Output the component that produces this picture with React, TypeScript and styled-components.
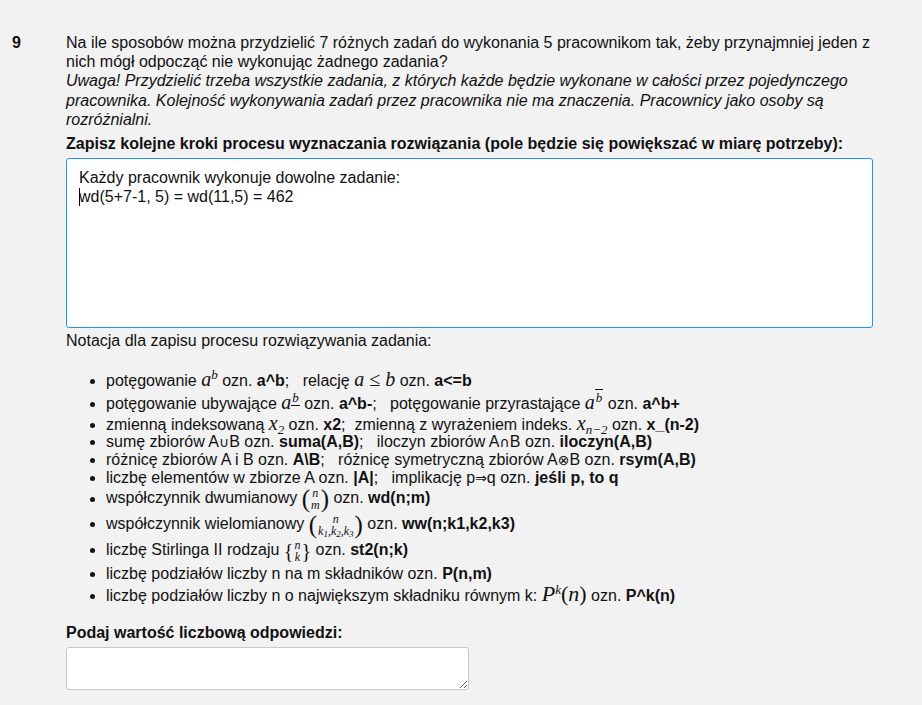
import React from "react";
import styled, { createGlobalStyle } from "styled-components";

const Global = createGlobalStyle`
  body {
    margin: 0;
    background: #f2f2f2;
    font-family: "Liberation Sans", Arial, sans-serif;
    font-size: 16px;
    color: #111;
  }
`;

const Question = styled.div`
  display: grid;
  grid-template-columns: 66px 807px;
  padding-top: 33px;
  line-height: 19.2px;
`;

const Num = styled.div`
  font-weight: bold;
  padding-left: 12px;
`;

const Body = styled.div`
  display: flex;
  flex-direction: column;
`;

const Note = styled.div`
  font-style: italic;
`;

const Label = styled.div`
  font-weight: bold;
  margin-top: 5px;
  margin-bottom: 5px;
`;

const Editor = styled.div`
  background: #fff;
  border: 1px solid #1e93f0;
  border-radius: 3px;
  height: 170px;
  box-sizing: border-box;
  padding: 10px 12px;
  line-height: 18.4px;
`;

const Caret = styled.span`
  display: inline-block;
  width: 1px;
  height: 18px;
  background: #000;
  vertical-align: -4px;
  margin-right: -1px;
`;

const Plain = styled.div`
  margin-top: 3px;
`;

const List = styled.ul`
  margin: 16px 0 19px;
  padding-left: 40px;
`;

const Item = styled.li<{ $h?: number }>`
  height: ${(p) => p.$h ?? 19}px;
  line-height: ${(p) => p.$h ?? 19}px;
  white-space: nowrap;
`;

const M = styled.span`
  font-family: "Liberation Serif", "DejaVu Serif", serif;
  font-style: italic;
  font-size: 20px;
`;

const Up = styled.sup`
  font-size: 13px;
  vertical-align: 7px;
  line-height: 0;
`;

const Down = styled.sub<{ $tiny?: boolean }>`
  font-size: ${(p) => (p.$tiny ? 9 : 13)}px;
  vertical-align: ${(p) => (p.$tiny ? -2 : -4)}px;
  line-height: 0;
`;

const Bar = styled.span<{ $under?: boolean }>`
  ${(p) => (p.$under ? "border-bottom" : "border-top")}: 1px solid #111;
  padding: 0 1px;
`;

const Stack = styled.span`
  display: inline-flex;
  flex-direction: column;
  align-items: center;
  vertical-align: middle;
  font-family: "Liberation Serif", "DejaVu Serif", serif;
  font-style: italic;
  font-size: 12px;
  line-height: 12px;
  margin: 0 1px;
`;

const Fence = styled.span<{ $brace?: boolean }>`
  font-family: "Liberation Serif", "DejaVu Serif", serif;
  font-size: ${(p) => (p.$brace ? 20 : 25)}px;
  vertical-align: middle;
  line-height: 20px;
`;

const Upright = styled.span`
  font-style: normal;
`;

const Sym = styled.span`
  font-family: "DejaVu Sans", sans-serif;
  font-size: 14px;
`;

const Answer = styled.textarea`
  width: 403px;
  height: 43px;
  box-sizing: border-box;
  border: 1px solid #c8c8c8;
  border-radius: 3px;
  background: #fff;
  margin-top: 4px;
`;

const Gap = () => <>&nbsp;&nbsp;</>;

export default function App() {
  return (
    <>
      <Global />
      <Question>
        <Num>9</Num>
        <Body>
          <div>
            Na ile sposobów można przydzielić 7 różnych zadań do wykonania 5 pracownikom tak, żeby przynajmniej jeden z
            nich mógł odpocząć nie wykonując żadnego zadania?
          </div>
          <Note>
            Uwaga! Przydzielić trzeba wszystkie zadania, z których każde będzie wykonane w całości przez pojedynczego
            pracownika. Kolejność wykonywania zadań przez pracownika nie ma znaczenia. Pracownicy jako osoby są
            rozróżnialni.
          </Note>
          <Label>Zapisz kolejne kroki procesu wyznaczania rozwiązania (pole będzie się powiększać w miarę potrzeby):</Label>
          <Editor>
            <div>Każdy pracownik wykonuje dowolne zadanie:</div>
            <div>
              <Caret />
              wd(5+7-1, 5) = wd(11,5) = 462
            </div>
          </Editor>
          <Plain>Notacja dla zapisu procesu rozwiązywania zadania:</Plain>
          <List>
            <Item $h={26}>
              potęgowanie <M>a<Up>b</Up></M> ozn. <b>a^b</b>;<Gap /> relację <M>a ≤ b</M> ozn. <b>a&lt;=b</b>
            </Item>
            <Item $h={21.5}>
              potęgowanie ubywające <M>a<Up><Bar $under>b</Bar></Up></M> ozn. <b>a^b-</b>;<Gap /> potęgowanie przyrastające{" "}
              <M>a<Up><Bar>b</Bar></Up></M> ozn. <b>a^b+</b>
            </Item>
            <Item $h={18}>
              zmienną indeksowaną <M>x<Down>2</Down></M> ozn. <b>x2</b>;<Gap />zmienną z wyrażeniem indeks.{" "}
              <M>x<Down>n−2</Down></M> ozn. <b>x_(n-2)</b>
            </Item>
            <Item $h={19}>
              sumę zbiorów A<Sym>∪</Sym>B ozn. <b>suma(A,B)</b>;<Gap /> iloczyn zbiorów A<Sym>∩</Sym>B ozn. <b>iloczyn(A,B)</b>
            </Item>
            <Item $h={18.5}>
              różnicę zbiorów A i B ozn. <b>A\B</b>;<Gap /> różnicę symetryczną zbiorów A<Sym>⊗</Sym>B ozn. <b>rsym(A,B)</b>
            </Item>
            <Item $h={18}>
              liczbę elementów w zbiorze A ozn. <b>|A|</b>;<Gap /> implikację p<Sym>⇒</Sym>q ozn. <b>jeśli p, to q</b>
            </Item>
            <Item $h={22.5}>
              współczynnik dwumianowy{" "}
              <Fence>(</Fence>
              <Stack>
                <span>n</span>
                <span>m</span>
              </Stack>
              <Fence>)</Fence> ozn. <b>wd(n;m)</b>
            </Item>
            <Item $h={27.5}>
              współczynnik wielomianowy{" "}
              <Fence>(</Fence>
              <Stack>
                <span>n</span>
                <span>
                  k<Down $tiny>1</Down>,k<Down $tiny>2</Down>,k<Down $tiny>3</Down>
                </span>
              </Stack>
              <Fence>)</Fence> ozn. <b>ww(n;k1,k2,k3)</b>
            </Item>
            <Item $h={25.5}>
              liczbę Stirlinga II rodzaju <Fence $brace>{"{"}</Fence>
              <Stack>
                <span>n</span>
                <span>k</span>
              </Stack>
              <Fence $brace>{"}"}</Fence> ozn. <b>st2(n;k)</b>
            </Item>
            <Item $h={21.5}>
              liczbę podziałów liczby n na m składników ozn. <b>P(n,m)</b>
            </Item>
            <Item $h={20}>
              liczbę podziałów liczby n o największym składniku równym k:{" "}
              <M style={{ fontSize: 22 }}>
                P<Up>k</Up>
                <Upright>(</Upright>n<Upright>)</Upright>
              </M>{" "}
              ozn. <b>P^k(n)</b>
            </Item>
          </List>
          <Label style={{ margin: 0 }}>Podaj wartość liczbową odpowiedzi:</Label>
          <Answer />
        </Body>
      </Question>
    </>
  );
}
